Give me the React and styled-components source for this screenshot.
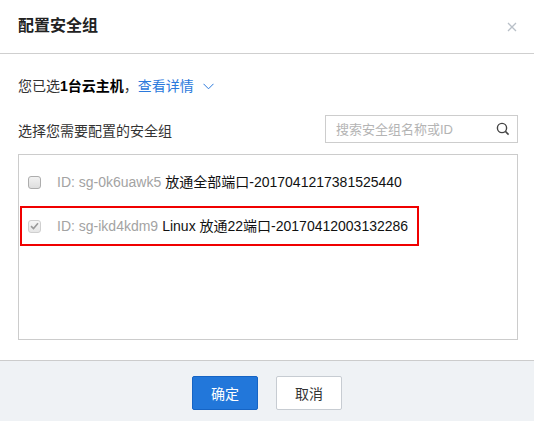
import React from "react";
import styled, { createGlobalStyle } from "styled-components";

const GlobalStyle = createGlobalStyle`
  html, body { margin: 0; padding: 0; background: #fff; }
  body {
    font-family: "Liberation Sans", "Noto Sans CJK SC", sans-serif;
    font-size: 14px;
    color: #333;
  }
  * { box-sizing: border-box; }
`;

const Dialog = styled.div`
  width: 534px;
  height: 421px;
  background: #fff;
  display: flex;
  flex-direction: column;
`;

const Header = styled.div`
  height: 54px;
  flex: none;
  padding: 0 18px;
  display: flex;
  align-items: center;
  justify-content: space-between;
  border-bottom: 1px solid #cfcfcf;
`;

const Title = styled.h2`
  margin: 0;
  font-size: 16px;
  line-height: 20px;
  font-weight: 700;
  color: #222;
  padding-bottom: 1px;
`;

const CloseButton = styled.button`
  border: 0;
  background: none;
  padding: 0;
  margin-right: -2px;
  width: 13px;
  height: 13px;
  display: flex;
  align-items: center;
  justify-content: center;
  cursor: pointer;
`;

const Body = styled.div`
  flex: 1;
  padding: 0 16px 0 18px;
  display: flex;
  flex-direction: column;
`;

const InfoLine = styled.div`
  margin-top: 22px;
  height: 20px;
  line-height: 20px;
  display: flex;
  align-items: center;
  color: #333;
`;

const Strong = styled.b`
  font-weight: 700;
  color: #000;
`;

const Link = styled.a`
  color: #2b79dc;
  text-decoration: none;
  cursor: pointer;
`;

const Chevron = styled.svg`
  margin-left: 9px;
  margin-top: 1px;
`;

const Toolbar = styled.div`
  margin-top: 19px;
  height: 28px;
  display: flex;
  align-items: center;
  justify-content: space-between;
`;

const Label = styled.span`
  line-height: 20px;
  color: #333;
  padding-top: 3px;
`;

const SearchBox = styled.div`
  width: 193px;
  height: 28px;
  border: 1px solid #cdcdcd;
  display: flex;
  align-items: center;
  padding: 0 7px 0 10px;
`;

const SearchInput = styled.input`
  flex: 1;
  min-width: 0;
  border: 0;
  outline: none;
  padding: 0;
  font-family: inherit;
  font-size: 13px;
  color: #333;
  &::placeholder { color: #b4b4b4; }
`;

const List = styled.div`
  margin-top: 11px;
  height: 186px;
  border: 1px solid #cccccc;
  padding: 7px 0 0 1px;
  display: flex;
  flex-direction: column;
  gap: 4px;
`;

const Row = styled.label`
  width: 399px;
  height: 40px;
  display: flex;
  align-items: center;
  padding-left: 6px;
  border: 2px solid ${(p) => (p.$highlight ? "#f00000" : "transparent")};
  white-space: nowrap;
  line-height: 20px;
`;

const Check = styled.span`
  width: 13px;
  height: 13px;
  flex: none;
  margin-right: 16px;
  border-radius: 3px;
  border: 1px solid ${(p) => (p.$checked ? "#cfcfcf" : "#adadad")};
  background: ${(p) =>
    p.$checked
      ? "linear-gradient(#f6f6f6, #e6e6e6)"
      : "linear-gradient(#f2f2f2, #dedede)"};
  display: flex;
  align-items: center;
  justify-content: center;
`;

const SgId = styled.span`
  color: #a3a3a3;
  margin-right: 4px;
`;

const SgName = styled.span`
  color: #111;
`;

const Footer = styled.div`
  height: 61px;
  flex: none;
  border-top: 1px solid #cccccc;
  background: #eff2f5;
  display: flex;
  justify-content: center;
  align-items: flex-start;
  padding-top: 15px;
  gap: 18px;
`;

const Button = styled.button`
  width: 66px;
  height: 34px;
  border-radius: 2px;
  font-family: inherit;
  font-size: 14px;
  cursor: pointer;
  padding: 0;
  border: 1px solid ${(p) => (p.$primary ? "#1664c4" : "#c7ccd2")};
  background: ${(p) => (p.$primary ? "#2277da" : "#fff")};
  color: ${(p) => (p.$primary ? "#fff" : "#333")};
`;

const groups = [
  {
    id: "sg-0k6uawk5",
    name: "放通全部端口-2017041217381525440",
    checked: false,
  },
  {
    id: "sg-ikd4kdm9",
    name: "Linux 放通22端口-20170412003132286",
    checked: true,
    highlight: true,
  },
];

function CheckMark() {
  return (
    <svg width="9" height="8" viewBox="0 0 9 8">
      <path d="M1 4.2 L3.5 6.6 L8 1.2" fill="none" stroke="#9a9a9a" strokeWidth="1.6" />
    </svg>
  );
}

export default function App() {
  return (
    <>
      <GlobalStyle />
      <Dialog>
        <Header>
          <Title>配置安全组</Title>
          <CloseButton aria-label="close">
            <svg width="10" height="10" viewBox="0 0 10 10">
              <path d="M1 1 L9 9 M9 1 L1 9" stroke="#b9c0c8" strokeWidth="1.3" />
            </svg>
          </CloseButton>
        </Header>
        <Body>
          <InfoLine>
            您已选<Strong>1台云主机</Strong>，<Link>查看详情</Link>
            <Chevron width="11" height="7" viewBox="0 0 11 7">
              <path d="M0.5 0.8 L5.5 5.8 L10.5 0.8" fill="none" stroke="#2b79dc" strokeWidth="1" />
            </Chevron>
          </InfoLine>
          <Toolbar>
            <Label>选择您需要配置的安全组</Label>
            <SearchBox>
              <SearchInput placeholder="搜索安全组名称或ID" />
              <svg width="14" height="14" viewBox="0 0 14 14">
                <circle cx="6" cy="6" r="4.6" fill="none" stroke="#444" strokeWidth="1.4" />
                <path d="M9.4 9.4 L12.6 12.6" stroke="#444" strokeWidth="1.5" />
              </svg>
            </SearchBox>
          </Toolbar>
          <List>
            {groups.map((g) => (
              <Row key={g.id} $highlight={g.highlight}>
                <Check $checked={g.checked}>{g.checked && <CheckMark />}</Check>
                <SgId>ID: {g.id}</SgId>
                <SgName>{g.name}</SgName>
              </Row>
            ))}
          </List>
        </Body>
        <Footer>
          <Button $primary>确定</Button>
          <Button>取消</Button>
        </Footer>
      </Dialog>
    </>
  );
}
